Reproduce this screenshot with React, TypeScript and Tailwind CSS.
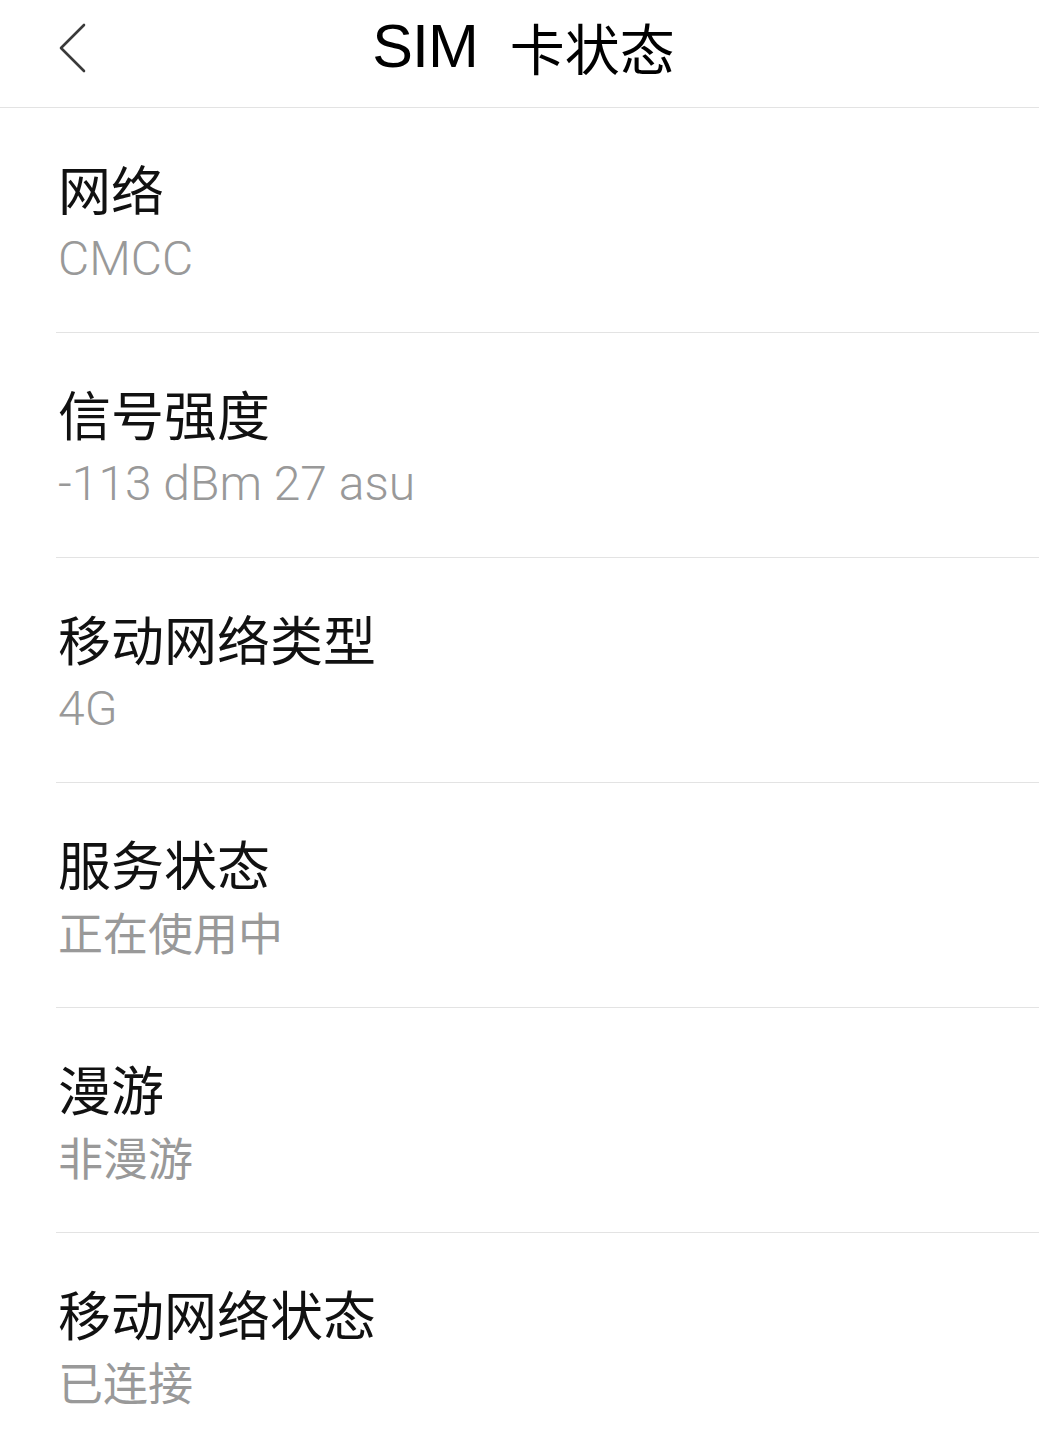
const rows = [
  { label: "网络", value: "CMCC", latin: true },
  { label: "信号强度", value: "-113 dBm 27 asu", latin: true },
  { label: "移动网络类型", value: "4G", latin: true },
  { label: "服务状态", value: "正在使用中", latin: false },
  { label: "漫游", value: "非漫游", latin: false },
  { label: "移动网络状态", value: "已连接", latin: false },
];

export default function App() {
  return (
    <div
      className="w-[1039px] h-[1429px] bg-white overflow-hidden"
      style={{ fontFamily: '"Roboto", "Noto Sans CJK SC", sans-serif' }}
    >
      {/* Header */}
      <header className="relative h-[108px] border-b border-[#e3e3e3] flex items-center justify-center">
        <button className="absolute left-[56px] top-[22px] w-[34px] h-[52px] flex items-center justify-center">
          <svg width="34" height="52" viewBox="0 0 34 52" fill="none">
            <path d="M28 3 L5 26 L28 49" stroke="#3a3a3a" strokeWidth="2.6" strokeLinecap="round" strokeLinejoin="round" />
          </svg>
        </button>
        <h1 className="pl-[8px] pb-[14px] leading-none text-black flex items-center gap-[32px]">
          <span className="text-[61px] tracking-[-1px]" style={{ fontFamily: '"Liberation Sans", sans-serif' }}>SIM</span>
          <span className="text-[55px]" style={{ fontFamily: '"Noto Sans CJK SC", sans-serif' }}>卡状态</span>
        </h1>
      </header>

      {/* Rows */}
      <div>
        {rows.map((row, i) => (
          <div key={row.label} className="ml-[56px]">
            <div className="h-[224px] pl-[2px] pt-[48px]">
              <div
                className="text-[53px] leading-[64px] text-[#111]"
                style={{ fontFamily: '"Noto Sans CJK SC", sans-serif' }}
              >
                {row.label}
              </div>
              <div
                className={
                  row.latin
                    ? "mt-[7px] text-[48px] leading-[64px] font-light text-[#999]"
                    : "mt-[5px] text-[45px] leading-[64px] text-[#999]"
                }
                style={{
                  fontFamily: row.latin
                    ? '"Roboto", sans-serif'
                    : '"Noto Sans CJK SC", sans-serif',
                }}
              >
                {row.value}
              </div>
            </div>
            {i < rows.length - 1 && <div className="h-px bg-[#e3e3e3]" />}
          </div>
        ))}
      </div>
    </div>
  );
}
